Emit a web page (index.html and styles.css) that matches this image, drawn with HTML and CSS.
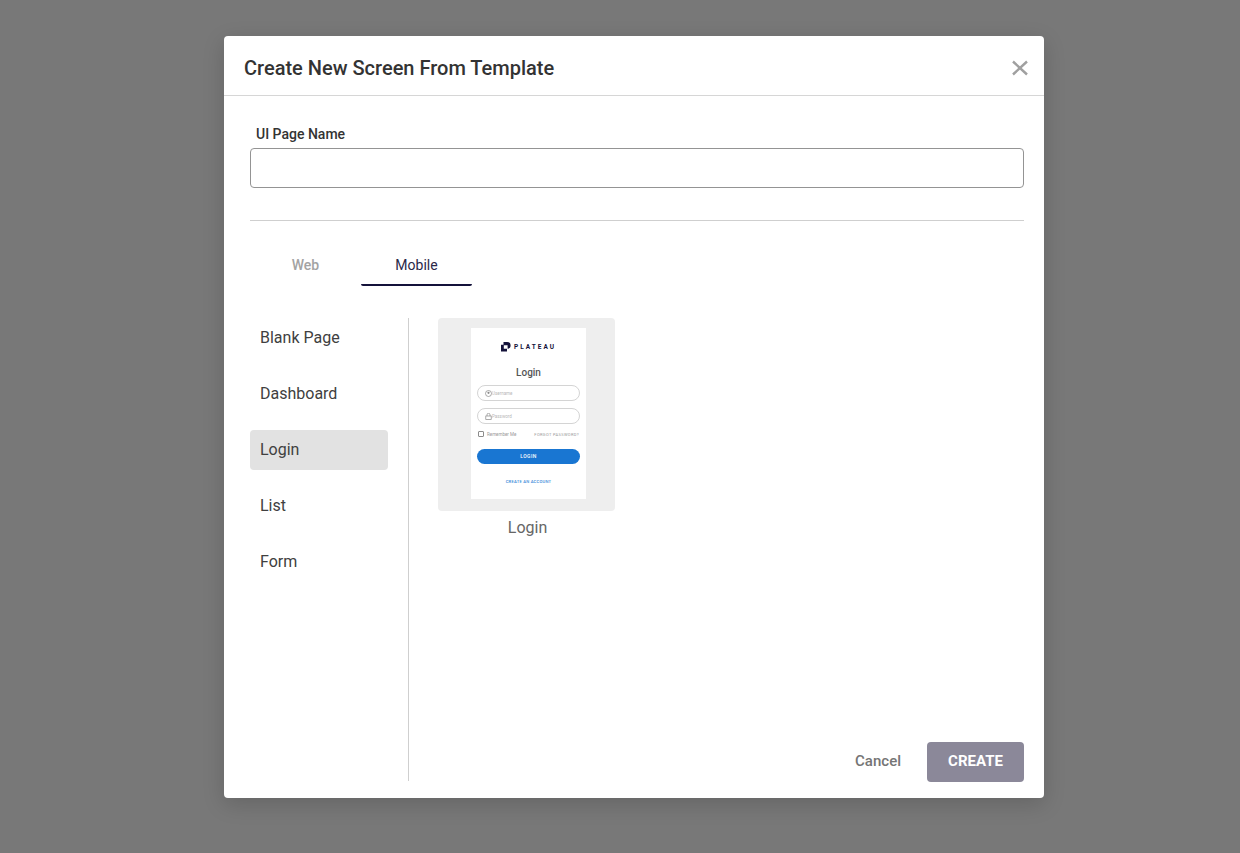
FILE: index.html
```html
<!DOCTYPE html>
<html lang="en">
<head>
  <meta charset="UTF-8" />
  <meta name="viewport" content="width=device-width, initial-scale=1.0" />
  <title>Create New Screen From Template</title>
  <link rel="stylesheet" href="styles.css">
</head>
<body>
  <div class="dialog">
    <div class="dialog-header">
      <h2 class="dialog-title">Create New Screen From Template</h2>
      <svg class="close-icon" width="16" height="16" viewBox="0 0 16 16">
        <path d="M1 1.5 L15 14.5 M15 1.5 L1 14.5" stroke="#a0a0a0" stroke-width="2.4" fill="none" />
      </svg>
    </div>

    <div class="dialog-body">
      <label class="field-label" for="pageName">UI Page Name</label>
      <input class="field-input" id="pageName" type="text" />
      <div class="divider"></div>

      <div class="tabs">
        <div class="tab">Web</div>
        <div class="tab active">Mobile</div>
      </div>

      <div class="content">
        <ul class="side-list">
          <li>Blank Page</li>
          <li>Dashboard</li>
          <li class="selected">Login</li>
          <li>List</li>
          <li>Form</li>
        </ul>

        <div class="main">
          <div class="template">
            <div class="thumb">
              <div class="phone">
                <div class="brand">
                  <svg width="10" height="10" viewBox="0 0 10 10">
                    <path d="M2.5 0 H6 a3.6 3.6 0 0 1 3.6 3.6 a3.2 3.2 0 0 1 -3 3.2 V3.2 H2.5 Z M0 2.8 H2.8 V6.8 H6 V9.6 H0 Z" fill="#14123a" />
                  </svg>
                  <span class="brand-name">PLATEAU</span>
                </div>
                <div class="phone-title">Login</div>
                <div class="phone-input">
                  <svg width="7" height="7" viewBox="0 0 7 7">
                    <circle cx="3.5" cy="3.5" r="3" fill="none" stroke="#888" stroke-width="0.7" />
                    <circle cx="3.5" cy="2.8" r="1.1" fill="#888" />
                  </svg>
                  <span>Username</span>
                </div>
                <div class="phone-input">
                  <svg width="7" height="7" viewBox="0 0 7 7">
                    <rect x="0.8" y="3" width="5.4" height="3.6" fill="none" stroke="#888" stroke-width="0.7" />
                    <path d="M2 3 V1.8 a1.5 1.5 0 0 1 3 0 V3" fill="none" stroke="#888" stroke-width="0.7" />
                  </svg>
                  <span>Password</span>
                </div>
                <div class="phone-row">
                  <span class="phone-check"></span>
                  <span class="phone-remember">Remember Me</span>
                  <span class="phone-forgot">FORGOT PASSWORD?</span>
                </div>
                <div class="phone-button">LOGIN</div>
                <div class="phone-link">CREATE AN ACCOUNT</div>
              </div>
            </div>
            <div class="template-name">Login</div>
          </div>

          <div class="actions">
            <button class="btn-cancel">Cancel</button>
            <button class="btn-create">CREATE</button>
          </div>
        </div>
      </div>
    </div>
  </div>
</body>
</html>
```

FILE: styles.css
```css
* {
  box-sizing: border-box;
}

body {
  margin: 0;
  height: 853px;
  overflow: hidden;
  padding: 36px 0 0 224px;
  background: #787878;
  font-family: Roboto, "Liberation Sans", sans-serif;
  color: #2b2b2b;
}

.dialog {
  width: 820px;
  height: 762px;
  background: #fff;
  border-radius: 4px;
  box-shadow: 0 6px 22px rgba(0, 0, 0, 0.16);
  display: flex;
  flex-direction: column;
}

.dialog-header {
  height: 60px;
  flex-shrink: 0;
  padding: 4px 16px 0 20px;
  border-bottom: 1px solid #d6d6d6;
  display: flex;
  align-items: center;
  justify-content: space-between;
}

.dialog-title {
  margin: 0;
  font-size: 20px;
  font-weight: 500;
  color: #333;
}

.dialog-body {
  flex: 1;
  padding: 29px 20px 16px 26px;
  display: flex;
  flex-direction: column;
}

.field-label {
  display: block;
  height: 23px;
  line-height: 18px;
  padding-left: 6px;
  font-size: 14px;
  font-weight: 500;
  color: #333;
}

.field-input {
  display: block;
  width: 100%;
  height: 40px;
  flex-shrink: 0;
  border: 1px solid #949494;
  border-radius: 4px;
  background: #fff;
}

.divider {
  height: 1px;
  flex-shrink: 0;
  margin-top: 32px;
  background: #cfcfcf;
}

.tabs {
  display: flex;
  margin-top: 23px;
  flex-shrink: 0;
}

.tab {
  width: 111px;
  height: 42px;
  line-height: 42px;
  text-align: center;
  font-size: 14px;
  font-weight: 500;
  color: #a3a3a3;
}

.tab.active {
  color: #2b2848;
  font-weight: 400;
  border-bottom: 2px solid #14123a;
  border-radius: 0 0 2px 2px;
}

.content {
  flex: 1;
  margin-top: 32px;
  display: flex;
  min-height: 0;
}

.side-list {
  list-style: none;
  margin: 0 0 1px;
  padding: 0 20px 0 0;
  width: 159px;
  flex-shrink: 0;
  border-right: 1px solid #cfcfcf;
  display: flex;
  flex-direction: column;
  gap: 16px;
}

.side-list li {
  height: 40px;
  line-height: 40px;
  padding-left: 10px;
  border-radius: 4px;
  font-size: 16px;
  color: #404040;
}

.side-list li.selected {
  background: #e2e2e2;
}

.main {
  flex: 1;
  padding-left: 29px;
  display: flex;
  flex-direction: column;
  justify-content: space-between;
}

.template {
  width: 177px;
}

.thumb {
  height: 193px;
  background: #eee;
  border-radius: 4px;
  padding: 10px 0 0 4px;
  display: flex;
  justify-content: center;
}

.phone {
  width: 115px;
  height: 171px;
  background: #fff;
  padding: 0 6px;
  color: #444;
}

.brand {
  height: 10px;
  margin-top: 14px;
  display: flex;
  align-items: center;
  justify-content: center;
  gap: 3px;
}

.brand-name {
  font-size: 6.5px;
  line-height: 10px;
  font-weight: 700;
  letter-spacing: 2px;
  color: #14123a;
}

.phone-title {
  margin-top: 15px;
  height: 12px;
  line-height: 12px;
  text-align: center;
  font-size: 10px;
  font-weight: 500;
  color: #555;
}

.phone-input {
  height: 16px;
  margin-top: 7px;
  border: 1px solid #d4d4d4;
  border-radius: 8px;
  padding-left: 7px;
  display: flex;
  align-items: center;
  font-size: 4.5px;
  color: #b8b8b8;
}

.phone-title + .phone-input {
  margin-top: 6px;
}

.phone-row {
  margin-top: 7px;
  height: 6px;
  padding: 0 1px;
  display: flex;
  align-items: center;
  font-size: 4.5px;
  color: #999;
}

.phone-check {
  width: 6px;
  height: 6px;
  border: 1px solid #8c8c8c;
  border-radius: 1px;
  margin-right: 3px;
}

.phone-forgot {
  margin-left: auto;
  font-size: 4px;
  letter-spacing: 0.35px;
}

.phone-button {
  margin-top: 12px;
  height: 15px;
  line-height: 15px;
  background: #1976d2;
  border-radius: 8px;
  text-align: center;
  font-size: 5px;
  font-weight: 500;
  letter-spacing: 0.4px;
  color: #fff;
}

.phone-link {
  margin-top: 15px;
  text-align: center;
  font-size: 4.2px;
  font-weight: 500;
  letter-spacing: 0.2px;
  color: #3b8ad9;
}

.template-name {
  margin-top: 7px;
  padding-left: 2px;
  text-align: center;
  font-size: 16px;
  line-height: 19px;
  color: #666;
}

.actions {
  display: flex;
  justify-content: flex-end;
  align-items: center;
  gap: 26px;
}

.btn-cancel {
  border: none;
  background: none;
  padding: 0 0 2px;
  font: 500 15px Roboto, "Liberation Sans", sans-serif;
  color: #757575;
}

.btn-create {
  width: 97px;
  height: 40px;
  padding: 0 0 2px;
  border: none;
  border-radius: 4px;
  background: #8b8899;
  font: 700 15px Roboto, "Liberation Sans", sans-serif;
  color: #fff;
}
```
